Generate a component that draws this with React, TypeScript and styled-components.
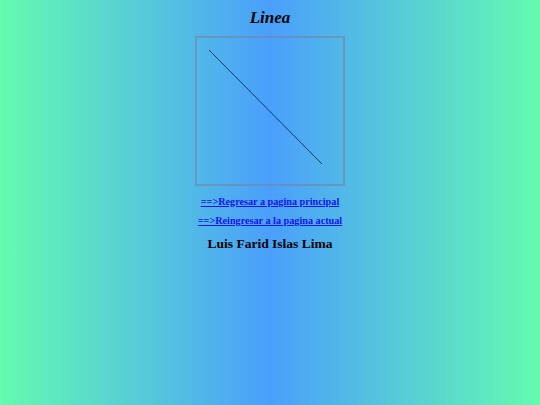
import React, { useEffect, useRef } from 'react'
import styled, { createGlobalStyle } from 'styled-components'

const GlobalStyle = createGlobalStyle`
  html, body {
    margin: 0;
    padding: 0;
    height: 100%;
  }
  body {
    background: linear-gradient(to right, #64fbb0 0%, #4a9ffc 50%, #64fbb0 100%);
    font-family: "Liberation Serif", "Times New Roman", serif;
    color: #000;
  }
`

const Page = styled.div`
  display: flex;
  flex-direction: column;
  align-items: center;
  padding-top: 8px;
`

const Title = styled.h1`
  margin: 0;
  font-size: 17px;
  font-style: italic;
  font-weight: bold;
  line-height: 20px;
`

const Canvas = styled.canvas`
  margin-top: 8px;
  width: 146px;
  height: 146px;
  border: 2px solid rgba(120, 130, 160, 0.6);
`

const NavLink = styled.a<{ $first?: boolean }>`
  margin-top: ${({ $first }) => ($first ? '10px' : '7px')};
  font-size: 10.2px;
  font-weight: bold;
  line-height: 12px;
  color: #1414ee;
  text-decoration: underline;
`

const Author = styled.h3`
  margin: 9px 0 0;
  font-size: 13.5px;
  font-weight: bold;
  line-height: 16px;
`

const App: React.FC = () => {
  const ref = useRef<HTMLCanvasElement>(null)

  useEffect(() => {
    const ctx = ref.current?.getContext('2d')
    if (!ctx) return
    ctx.strokeStyle = '#0a3a60'
    ctx.lineWidth = 1
    ctx.beginPath()
    ctx.moveTo(12, 12)
    ctx.lineTo(125, 126)
    ctx.stroke()
  }, [])

  return (
    <>
      <GlobalStyle />
      <Page>
        <Title>Linea</Title>
        <Canvas ref={ref} width={146} height={146} />
        <NavLink $first href="#">==&gt;Regresar a pagina principal</NavLink>
        <NavLink href="#">==&gt;Reingresar a la pagina actual</NavLink>
        <Author>Luis Farid Islas Lima</Author>
      </Page>
    </>
  )
}

export default App
